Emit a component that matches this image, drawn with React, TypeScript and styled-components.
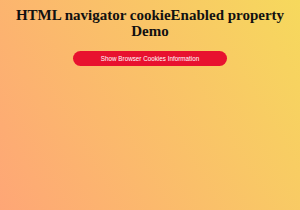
import styled, { createGlobalStyle } from "styled-components";

const GlobalStyle = createGlobalStyle`
  html, body {
    margin: 0;
    padding: 0;
    height: 100%;
  }
  body {
    background: linear-gradient(60deg, #fea676, #f6d95d);
    min-height: 210px;
  }
`;

const Page = styled.div`
  display: flex;
  flex-direction: column;
  align-items: center;
  padding-top: 7px;
`;

const Title = styled.h1`
  margin: 0;
  width: 290px;
  font-family: "Liberation Serif", "Times New Roman", serif;
  font-size: 15px;
  line-height: 16px;
  font-weight: bold;
  text-align: center;
  color: #111;
`;

const ShowButton = styled.button`
  margin-top: 12px;
  width: 154px;
  height: 15px;
  border: none;
  border-radius: 8px;
  background: #e8112f;
  color: #fff;
  font-family: "Liberation Sans", Arial, sans-serif;
  font-size: 6.3px;
  padding: 0;
  cursor: pointer;
`;

export default function App() {
  return (
    <>
      <GlobalStyle />
      <Page>
        <Title>HTML navigator cookieEnabled property Demo</Title>
        <ShowButton>Show Browser Cookies Information</ShowButton>
      </Page>
    </>
  );
}
